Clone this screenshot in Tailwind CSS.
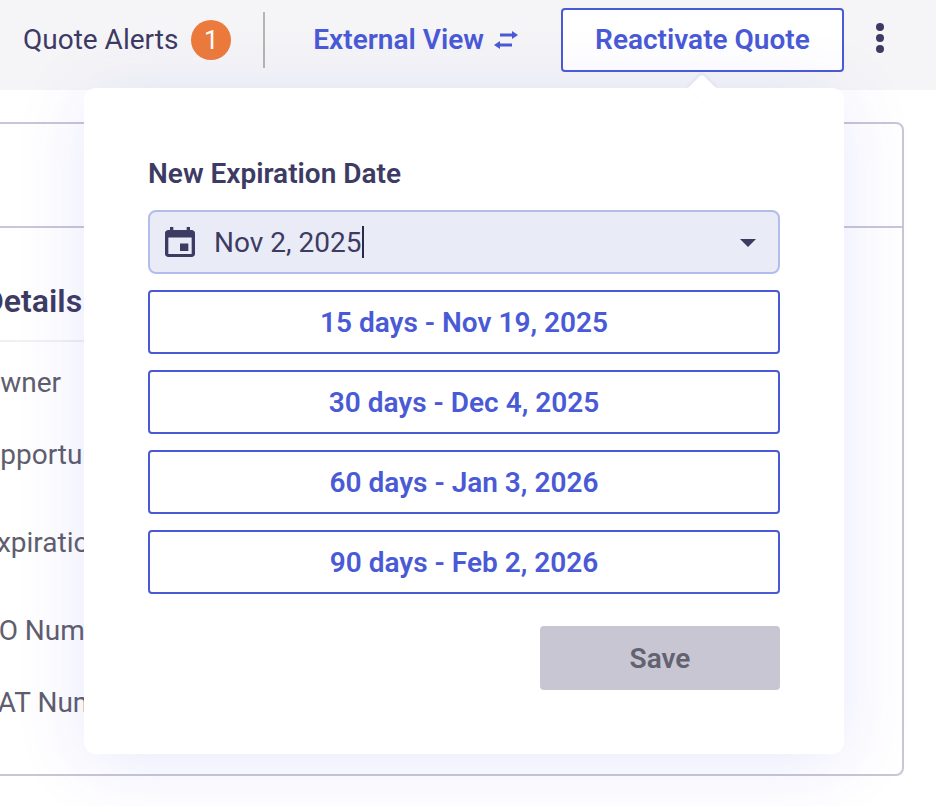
<!DOCTYPE html>
<html lang="en">
<head>
    <meta charset="UTF-8">
    <meta name="viewport" content="width=device-width, initial-scale=1.0">
    <title>Reactivate Quote</title>
    <script src="https://cdn.jsdelivr.net/npm/@tailwindcss/browser@4"></script>
</head>
<body class="relative h-[806px] overflow-hidden bg-white font-['Roboto',sans-serif] text-[#3d3b63]">

    <!-- Top bar -->
    <header class="flex h-[90px] items-start bg-[#f5f5f7] pt-2 pl-[23px]">
        <div class="flex h-16 items-center">
            <span class="text-[28px] leading-8">Quote Alerts</span>
            <span class="ml-[13px] flex h-10 w-10 items-center justify-center rounded-full bg-[#ec7a3c] text-[26px] text-white">1</span>
            <span class="ml-8 h-14 w-0.5 bg-[#b5b5b5]"></span>
            <a class="ml-[48px] flex items-center text-[28px] leading-8 font-semibold text-[#4a5ad6]">
                External View
                <svg class="ml-[10px]" width="24" height="18" viewBox="0 0 24 18" fill="#4a5ad6">
                    <path d="M6 2.5h12V0l6 4-6 4V5.5H6zM18 12.500H6V10l-6 4 6 4v-2.500h12z"/>
                </svg>
            </a>
            <button class="ml-[43px] h-16 w-[283px] rounded border-2 border-[#4a5ad6] bg-white text-[28px] font-semibold text-[#4a5ad6]">Reactivate Quote</button>
            <div class="-mt-[5px] ml-8 flex flex-col gap-[3px]">
                <span class="h-2 w-2 rounded-full bg-[#3d3b63]"></span>
                <span class="h-2 w-2 rounded-full bg-[#3d3b63]"></span>
                <span class="h-2 w-2 rounded-full bg-[#3d3b63]"></span>
            </div>
        </div>
    </header>

    <!-- Card behind the popover -->
    <section class="mt-8 mr-8 -ml-[21px] h-[654px] rounded-lg border-2 border-[#c8c6d8] bg-white">
        <div class="h-[104px] border-b-2 border-[#c8c6d8]"></div>
        <div class="w-[500px] pt-[53px]">
            <h2 class="border-b-2 border-[#f0f0f4] pb-[19px] pl-0.5 text-[32px] leading-10 font-semibold">Details</h2>
            <div class="flex flex-col text-[28px] leading-8 text-[#5f5e6d]">
                <span class="mt-[25px]">Owner</span>
                <span class="mt-10">Opportunity</span>
                <span class="mt-14">Expiration Date</span>
                <span class="mt-14">PO Number</span>
                <span class="mt-10">VAT Number</span>
            </div>
        </div>
    </section>

    <!-- Popover -->
    <div class="absolute top-[88px] left-[84px] w-[760px] rounded-xl bg-white px-16 pt-[70px] pb-16 shadow-[0_8px_70px_rgba(80,80,230,0.13)]">
        <span class="absolute -top-[10px] left-[608px] h-5 w-5 rotate-45 rounded-tl-sm bg-white shadow-[-1px_-1px_3px_rgba(80,80,230,0.1)]"></span>
        <label class="relative block text-[28px] leading-8 font-semibold">New Expiration Date</label>
        <div class="mt-5 flex h-16 items-center rounded-lg border-2 border-[#b4bcec] bg-[#e9ebf7] pr-[22px] pl-[15px]">
            <svg width="30" height="30" viewBox="3 1 18 20" preserveAspectRatio="none" fill="#3d3b63">
                <path d="M17 12h-5v5h5v-5zM16 1v2H8V1H6v2H5c-1.11 0-1.99.9-1.99 2L3 19c0 1.1.89 2 2 2h14c1.1 0 2-.9 2-2V5c0-1.1-.9-2-2-2h-1V1h-2zm3 18H5V8h14v11z"/>
            </svg>
            <span class="mt-0.5 ml-[19px] text-[28px] leading-8">Nov 2, 2025</span>
            <span class="ml-px h-8 w-0.5 bg-[#2b2a45]"></span>
            <svg class="mt-px ml-auto" width="16" height="8" viewBox="0 0 16 8" fill="#3d3b63"><path d="M0 0h16L8 8z"/></svg>
        </div>
        <div class="mt-4 flex flex-col gap-4">
            <button class="h-16 rounded border-2 border-[#4a5ad6] pt-0.5 text-[28px] font-semibold text-[#4a5ad6]">15 days - Nov 19, 2025</button>
            <button class="h-16 rounded border-2 border-[#4a5ad6] pt-0.5 text-[28px] font-semibold text-[#4a5ad6]">30 days - Dec 4, 2025</button>
            <button class="h-16 rounded border-2 border-[#4a5ad6] pt-0.5 text-[28px] font-semibold text-[#4a5ad6]">60 days - Jan 3, 2026</button>
            <button class="h-16 rounded border-2 border-[#4a5ad6] pt-0.5 text-[28px] font-semibold text-[#4a5ad6]">90 days - Feb 2, 2026</button>
        </div>
        <div class="mt-8 flex justify-end">
            <button class="h-16 w-60 rounded bg-[#c8c6d3] pt-0.5 text-[28px] font-semibold text-[#636270]">Save</button>
        </div>
    </div>

</body>
</html>
